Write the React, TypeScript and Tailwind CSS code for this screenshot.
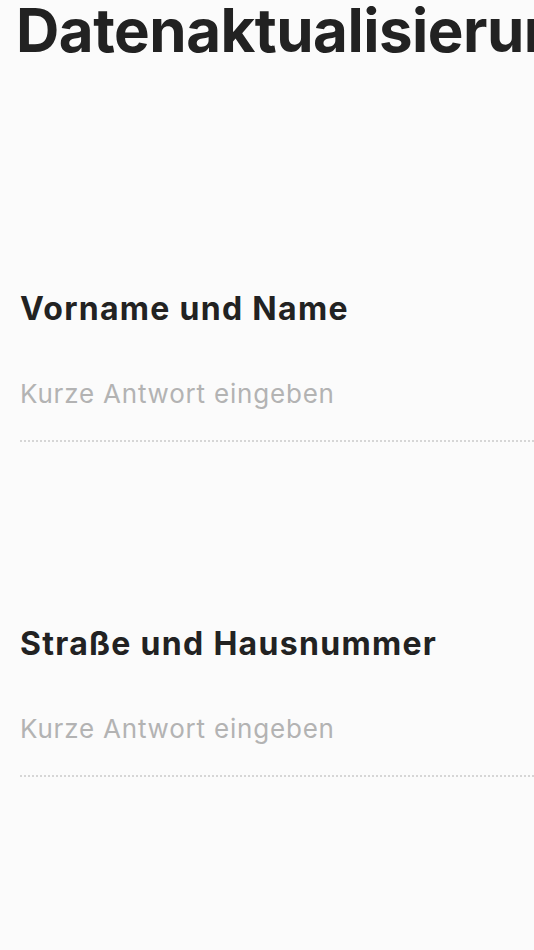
export default function App() {
  const fields = ["Vorname und Name", "Straße und Hausnummer"];
  return (
    <div className="min-h-[950px] w-[534px] overflow-hidden bg-[#fbfbfb] font-['Inter','Noto_Sans',sans-serif] text-[#222]">
      <h1 className="whitespace-nowrap pl-[16px] text-[60px] font-bold leading-[60px] tracking-[-0.5px]">
        Datenaktualisierung
      </h1>
      <div className="flex flex-col gap-[184px] pt-[231px]">
        {fields.map((f) => (
          <div key={f} className="pl-[20px]">
            <div className="text-[32px] font-bold leading-[36px] tracking-[1.3px]">{f}</div>
            <div className="pt-[51px] text-[26px] leading-[32px] tracking-[0.8px] text-[#b3b3b3]">Kurze Antwort eingeben</div>
            <div className="mt-[30px] border-b-2 border-dotted border-[#d6d6d6]" />
          </div>
        ))}
      </div>
    </div>
  );
}
